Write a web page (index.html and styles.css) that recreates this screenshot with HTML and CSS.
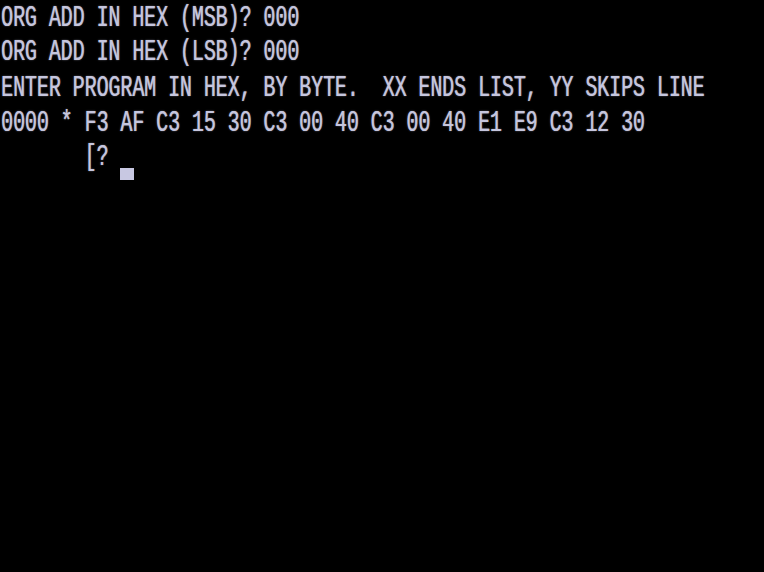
FILE: index.html
```html
<!DOCTYPE html>
<html>
<head>
<meta charset="utf-8">
<link rel="stylesheet" href="styles.css">
</head>
<body>
<div class="screen">
  <div class="text">
    <div class="line">ORG ADD IN HEX (MSB)? 000</div>
    <div class="line">ORG ADD IN HEX (LSB)? 000</div>
    <div class="line">ENTER PROGRAM IN HEX, BY BYTE.  XX ENDS LIST, YY SKIPS LINE</div>
    <div class="line">0000 * F3 AF C3 15 30 C3 00 40 C3 00 40 E1 E9 C3 12 30</div>
    <div class="line">       [? <span class="cursor"></span></div>
  </div>
</div>
</body>
</html>
```

FILE: styles.css
```css
html, body {
  margin: 0;
  padding: 0;
  background: #000;
}
.screen {
  width: 764px;
  height: 572px;
  background: #000;
  overflow: hidden;
}
.text {
  padding-left: 1px;
  font-family: "Liberation Mono", monospace;
  font-size: 20px;
  letter-spacing: -0.08px;
  line-height: 23.333px;
  color: #c6c6de;
  transform: scaleY(1.5);
  transform-origin: 0 0;
  text-shadow: 0.5px 0 0 rgba(198, 198, 222, 0.7), 0 0 1.5px rgba(200, 200, 230, 0.5);
}
.line {
  height: 23.333px;
  white-space: pre;
}
.cursor {
  display: inline-block;
  width: 14px;
  height: 8px;
  background: #c8c8e2;
  vertical-align: -9.5px;
}
```
